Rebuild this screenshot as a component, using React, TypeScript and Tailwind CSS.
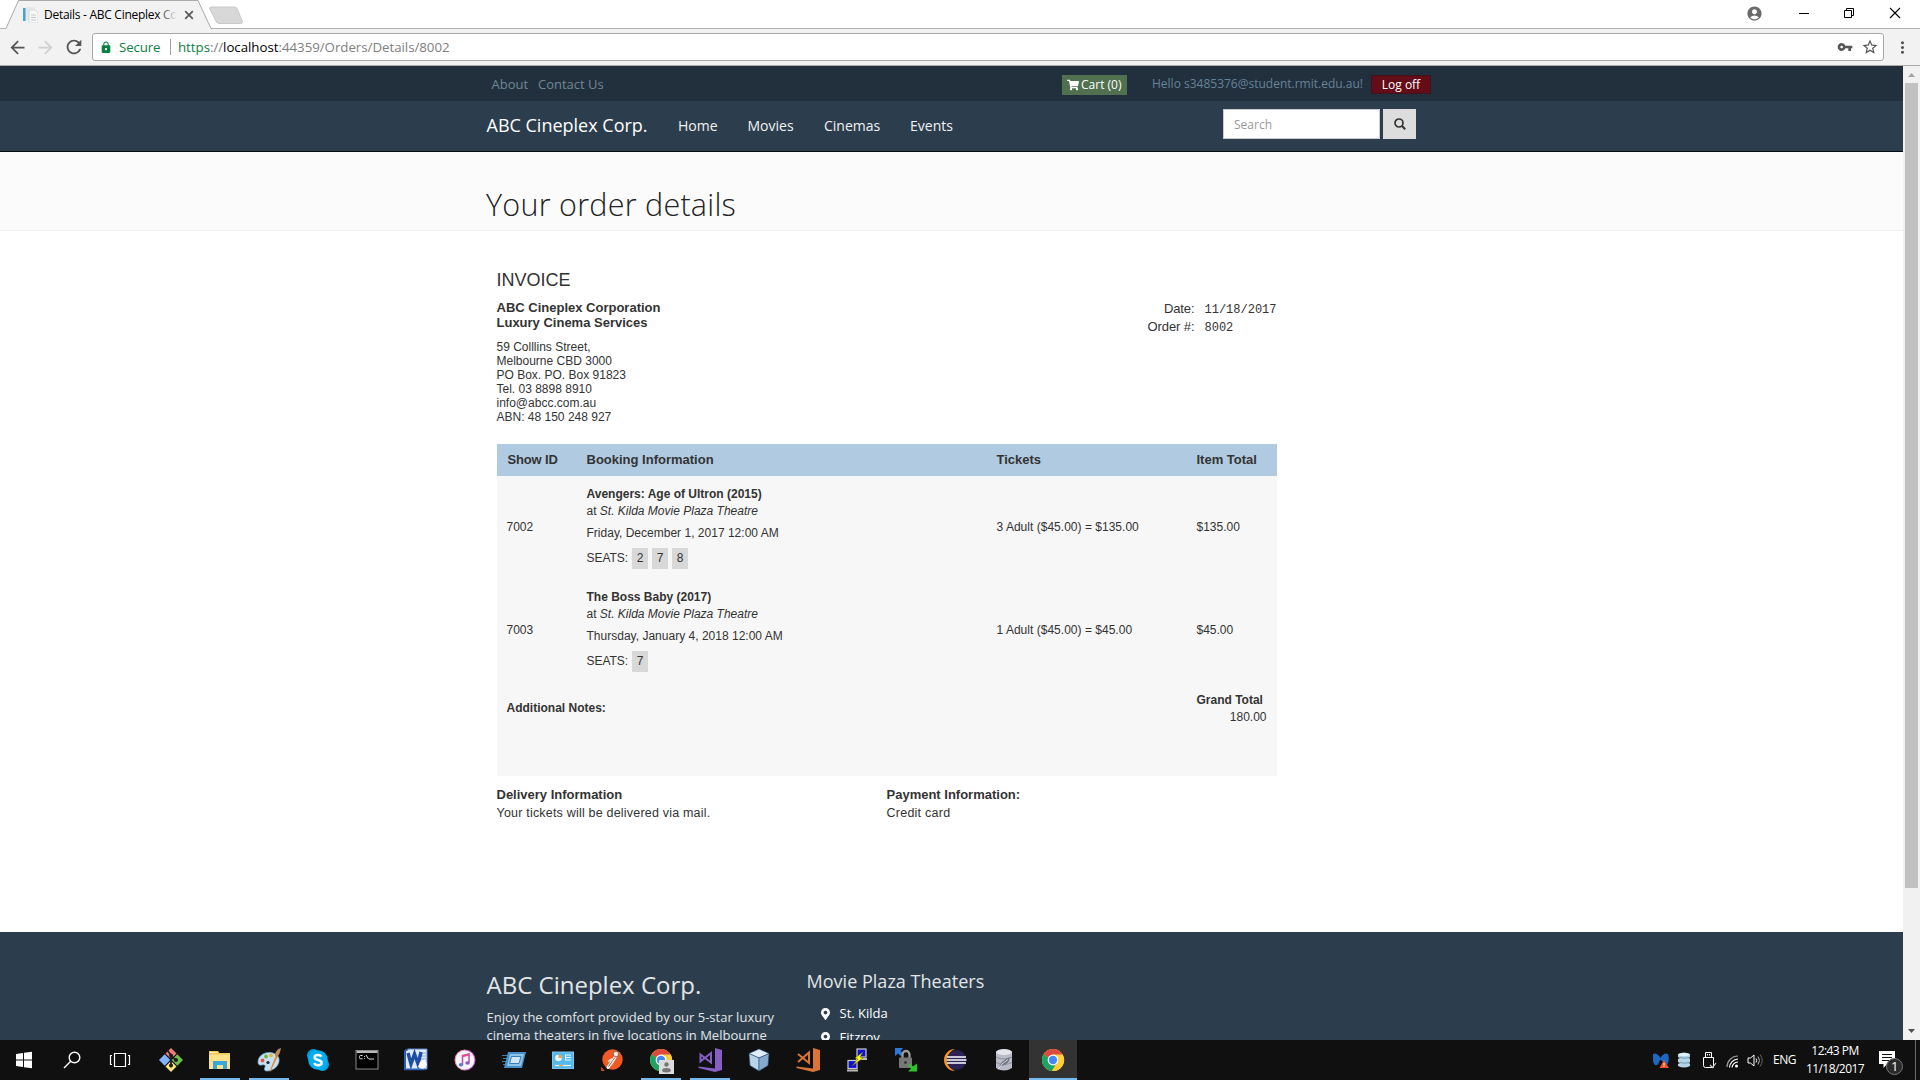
import React from "react";
import {
  MdAccountCircle,
  MdArrowBack,
  MdArrowForward,
  MdLock,
  MdMoreVert,
  MdRefresh,
  MdStarBorder,
  MdVpnKey,
} from "react-icons/md";
import { FaMapMarkerAlt, FaShoppingCart } from "react-icons/fa";

/* ---------- Browser chrome ---------- */

function TabStrip() {
  return (
    <div className="flex h-[29px] shrink-0 items-start border-b border-[#b3b3b3] bg-white">
      <div className="relative ml-[5px] -mb-px h-[29px] w-[208px] shrink-0">
        <svg className="absolute inset-0" width="208" height="29" viewBox="0 0 208 29">
          <path d="M0 29 L1 28.5 L13.5 .5 H193 L206 28.5 L208 29Z" fill="#f2f2f2" />
          <path d="M0 28.5 H1 L13.5 .5 H193 L206 28.5 H208" fill="none" stroke="#a9a9a9" />
        </svg>
        <div className="relative flex h-[29px] items-center pl-[17px]">
          <svg width="16" height="16" viewBox="0 0 16 16" className="shrink-0">
            <rect x="1" y="1" width="2.6" height="13" fill="#4ba3d3" />
            <rect x="4" y="0" width="9" height="13" fill="#e6e9ec" />
            <path d="M7 3h6l3 3v10H7z" fill="#f8f8f8" stroke="#cfd3d6" strokeWidth=".8" />
            <path d="M9 8h5M9 10.500h5M9 13h5" stroke="#c3c8cc" />
          </svg>
          <div className="relative ml-[6px] h-[20px] w-[133px] overflow-hidden whitespace-nowrap font-['Open_Sans',sans-serif] text-[12px] leading-[20px] tracking-[-0.28px] text-black">
            Details - ABC Cineplex Corp.
            <div className="absolute top-0 right-0 h-full w-[20px] bg-gradient-to-r from-transparent to-[#f2f2f2]" />
          </div>
          <svg className="ml-[7px]" width="10" height="10" viewBox="0 0 10 10">
            <path d="M1.200 1.200l7.600 7.600M8.800 1.200l-7.600 7.600" stroke="#5a5a5a" strokeWidth="1.700" />
          </svg>
        </div>
      </div>
      <svg className="mt-[6px] -ml-[5px]" width="37" height="20" viewBox="0 0 37 20">
        <path d="M3.500 1h23q2 0 2.800 2l5 12.500q.5 2-1.500 2H11q-2 0-2.800-2L1.800 3Q1.200 1 3.500 1z" fill="#d8d8d8" stroke="#c9c9c9" />
      </svg>
      <div className="ml-auto flex h-[26px] items-center">
        <MdAccountCircle className="mr-[35px] h-[17px] w-[17px] text-[#6b6b6b]" />
        <svg className="mr-[33px]" width="12" height="12" viewBox="0 0 12 12">
          <path d="M1 6.500h10" stroke="#000" />
        </svg>
        <svg className="mr-[34px]" width="12" height="12" viewBox="0 0 12 12">
          <path d="M1.500 3.500h7v7h-7zM3.500 3.500v-2h7v7h-2" fill="none" stroke="#000" />
        </svg>
        <svg className="mr-[19px]" width="12" height="12" viewBox="0 0 12 12">
          <path d="M1 1l10 10M11 1L1 11" stroke="#000" strokeWidth="1.100" />
        </svg>
      </div>
    </div>
  );
}

function Toolbar() {
  return (
    <div className="flex h-[37px] shrink-0 items-center border-b border-[#a9a9a9] bg-[#f2f2f2] font-['Open_Sans',sans-serif] text-[13px]">
      <MdArrowBack className="ml-[7px] h-[21px] w-[21px] text-[#555]" />
      <MdArrowForward className="ml-[7px] h-[21px] w-[21px] text-[#d0d0d0]" />
      <MdRefresh className="ml-[7px] h-[22px] w-[22px] text-[#555]" />
      <div className="ml-[7px] flex h-[28px] w-[1792px] items-center rounded-[3px] border border-[#a9a9a9] bg-white">
        <MdLock className="ml-[6px] h-[13px] w-[14px] text-[#0b8043]" />
        <span className="ml-[6px] w-[51px] pt-px text-[13.300px] whitespace-nowrap text-[#0b8043] tracking-[-0.15px]">Secure</span>
        <span className="h-[16px] w-px bg-[#a0a0a0]" />
        <span className="ml-[7px] pt-px text-[13.300px] whitespace-nowrap tracking-[-0.035px] text-[#808080]">
          <span className="text-[#0b8043]">https</span>://<span className="text-black">localhost</span>:44359/Orders/Details/8002
        </span>
        <MdVpnKey className="ml-auto h-[16px] w-[16px] text-[#555]" />
        <MdStarBorder className="mr-[4px] ml-[8px] h-[18px] w-[18px] text-[#555]" />
      </div>
      <MdMoreVert className="ml-[9px] h-[19px] w-[19px] text-[#555]" />
    </div>
  );
}

function Scrollbar() {
  return (
    <div className="flex w-[17px] shrink-0 flex-col items-center bg-[#f1f1f1]">
      <svg width="17" height="17" viewBox="0 0 17 17">
        <path d="M5 11h7L8.500 7z" fill="#a3a3a3" />
      </svg>
      <div className="h-[805px] w-[13px] bg-[#c1c1c1]" />
      <svg className="mt-auto" width="17" height="17" viewBox="0 0 17 17">
        <path d="M5 6h7L8.500 10z" fill="#505050" />
      </svg>
    </div>
  );
}

/* ---------- Site ---------- */

function SiteHeader() {
  return (
    <header className="font-['Open_Sans',sans-serif]">
      <div className="flex h-[35px] items-center bg-[#22303d] pl-[491.500px] text-[13px] text-[#708896]">
        <a className="w-[46.500px] pt-[2px]">About</a>
        <a className="pt-[2px]">Contact Us</a>
        <div className="mt-[3px] ml-auto flex h-[20px] w-[65px] items-center bg-[#50704f] pl-[5px] text-[12px] text-white">
          <FaShoppingCart className="mr-[2px] h-[12px] w-[12px] shrink-0" />
          <span className="whitespace-nowrap">Cart (0)</span>
        </div>
        <span className="ml-[25px] w-[219px] text-[12px] whitespace-nowrap text-[#66839a]">Hello s3485376@student.rmit.edu.au!</span>
        <a className="mt-[2px] mr-[472px] flex h-[19px] w-[60px] items-center justify-center border border-[#3c141b] bg-[#640c17] text-[12px] text-white">Log off</a>
      </div>
      <nav className="flex h-[51px] items-center border-b border-[#060b10] bg-[#2c3e4d] pl-[486.500px] text-[14px] text-[#f0f2f3]">
        <span className="mb-px w-[191.500px] text-[18px] text-white">ABC Cineplex Corp.</span>
        <a className="mb-[2px] w-[69.500px]">Home</a>
        <a className="mb-[2px] w-[76.500px]">Movies</a>
        <a className="mb-[2px] w-[86px]">Cinemas</a>
        <a className="mb-[2px]">Events</a>
        <div className="mr-[487px] mb-[4px] ml-auto flex gap-[3px]">
          <div className="h-[30px] w-[157px] border border-[#ccc] bg-white pl-[10px] text-[12px] leading-[30px] text-[#999]">Search</div>
          <div className="flex h-[30px] w-[33px] items-center justify-center bg-[#ddd]">
            <svg width="12" height="12" viewBox="0 0 12 12">
              <circle cx="5" cy="5" r="4" fill="none" stroke="#333" strokeWidth="1.700" />
              <path d="M8 8l3.200 3.200" stroke="#333" strokeWidth="2" />
            </svg>
          </div>
        </div>
      </nav>
      <div className="h-[79px] border-b border-[#f0f0f0] bg-[#fbfbfb] pt-[32px] pl-[486px]">
        <h1 className="text-[30.500px] leading-[40px] font-[340] tracking-[0.25px] text-[#222]">Your order details</h1>
      </div>
    </header>
  );
}

const columns = "grid grid-cols-[80px_410px_200px_90px]";

const bookings = [
  {
    id: "7002",
    title: "Avengers: Age of Ultron (2015)",
    when: "Friday, December 1, 2017 12:00 AM",
    seats: ["2", "7", "8"],
    tickets: "3 Adult ($45.00) = $135.00",
    total: "$135.00",
  },
  {
    id: "7003",
    title: "The Boss Baby (2017)",
    when: "Thursday, January 4, 2018 12:00 AM",
    seats: ["7"],
    tickets: "1 Adult ($45.00) = $45.00",
    total: "$45.00",
  },
];

function Invoice() {
  return (
    <main className="ml-[496.500px] h-[701px] w-[780px] shrink-0 pt-[39px] font-['Liberation_Sans',Arial,sans-serif] text-[12px] leading-[17px] text-[#333]">
      <h2 className="text-[18px] leading-[20px]">INVOICE</h2>
      <div className="mt-[10px] flex h-[124px] justify-between">
        <div>
          <div className="text-[13px] leading-[15px] font-bold">
            ABC Cineplex Corporation
            <br />
            Luxury Cinema Services
          </div>
          <div className="mt-[10px] leading-[14px]">
            59 Colllins Street,
            <br />
            Melbourne CBD 3000
            <br />
            PO Box. PO. Box 91823
            <br />
            Tel. 03 8898 8910
            <br />
            info@abcc.com.au
            <br />
            ABN: 48 150 248 927
          </div>
        </div>
        <div className="grid h-[36px] grid-cols-[1fr_72px] grid-rows-[18px_18px] gap-x-[10px] leading-[18px]">
          <span className="text-right text-[13px] tracking-[-0.1px]">Date:</span>
          <span className="pt-px font-['Liberation_Mono',monospace] text-[12px]">11/18/2017</span>
          <span className="text-right text-[13px] tracking-[-0.1px]">Order #:</span>
          <span className="pt-px font-['Liberation_Mono',monospace] text-[12px]">8002</span>
        </div>
      </div>
      <div className="mt-[20px] h-[332px] bg-[#f7f7f7]">
        <div className={columns + " h-[32px] bg-[#b0cbe1] pt-[7px] text-[13px] leading-[18px] font-bold"}>
          <span className="pl-[11px] tracking-[-0.15px]">Show ID</span>
          <span className="pl-[10px]">Booking Information</span>
          <span className="pl-[10px]">Tickets</span>
          <span className="pl-[10px]">Item Total</span>
        </div>
        {bookings.map((b) => (
          <div key={b.id} className={columns + " h-[103px] items-center"}>
            <span className="pl-[10px]">{b.id}</span>
            <div className="h-full pt-[10px] pl-[10px]">
              <div className="font-bold">{b.title}</div>
              <div>
                at <em>St. Kilda Movie Plaza Theatre</em>
              </div>
              <div className="mt-[5px] tracking-[0.01px]">{b.when}</div>
              <div className="mt-[6px] flex h-[21px] items-center gap-[4px]">
                <span className="w-[41.500px] tracking-[-0.05px]">SEATS:</span>
                {b.seats.map((s) => (
                  <span key={s} className="h-[21px] w-[16px] bg-[#d8d8d8] text-center leading-[20px]">
                    {s}
                  </span>
                ))}
              </div>
            </div>
            <span className="pl-[10px] tracking-[0.02px]">{b.tickets}</span>
            <span className="pl-[10px]">{b.total}</span>
          </div>
        ))}
        <div className="flex h-[53px] items-center justify-between pr-[10px] pl-[10px]">
          <span className="font-bold">Additional Notes:</span>
          <div className="w-[70px]">
            <div className="font-bold">Grand Total</div>
            <div className="text-right">180.00</div>
          </div>
        </div>
      </div>
      <div className="grid grid-cols-2 pt-[10px] leading-[18px]">
        <div>
          <div className="text-[13px] font-bold">Delivery Information</div>
          <div className="text-[12.500px] tracking-[0.2px]">Your tickets will be delivered via mail.</div>
        </div>
        <div>
          <div className="text-[13px] font-bold">Payment Information:</div>
          <div className="text-[12.500px] tracking-[0.25px]">Credit card</div>
        </div>
      </div>
    </main>
  );
}

function SiteFooter() {
  return (
    <footer className="flex h-[108px] shrink-0 overflow-hidden bg-[#2c3e4d] pl-[486.500px] font-['Open_Sans',sans-serif] text-[13px] text-[#e2e5e7]">
      <div className="w-[320px] pt-[37px]">
        <div className="text-[24px] leading-[32px]">ABC Cineplex Corp.</div>
        <p className="mt-[7px] w-[300px] leading-[18px] tracking-[0.01px] whitespace-nowrap">
          Enjoy the comfort provided by our 5-star luxury
          <br />
          cinema theaters in five locations in Melbourne
        </p>
      </div>
      <div className="pt-[37px]">
        <div className="text-[18px] leading-[24px] tracking-[0.02px]">Movie Plaza Theaters</div>
        <div className="mt-[9px] text-white">
          {["St. Kilda", "Fitzroy"].map((place) => (
            <div key={place} className="flex h-[24px] items-center pl-[14px]">
              <FaMapMarkerAlt className="mr-[10px] mb-px h-[12px] w-[9px]" />
              {place}
            </div>
          ))}
        </div>
      </div>
    </footer>
  );
}

/* ---------- Taskbar ---------- */

function ChromeLogo() {
  return (
    <>
      <circle cx="12" cy="12" r="11" fill="#f1c232" />
      <path d="M12 12L2.500 6.500A11 11 0 0 1 21.500 6.500Z" fill="#dd4b3e" />
      <path d="M12 12L2.500 6.500A11 11 0 0 0 11 23l4.500-8Z" fill="#1ea362" />
      <path d="M12 6.500h9.700A11 11 0 0 1 11 23l5.500-9z" fill="#fdd03b" />
      <circle cx="12" cy="12" r="5.400" fill="#fff" />
      <circle cx="12" cy="12" r="4.200" fill="#4688f1" />
    </>
  );
}

const icons: Record<string, React.ReactNode> = {
  start: (
    <path d="M4 6l7-1v6.500H4zM12 4.800l8-1.100v7.800h-8zM4 12.500h7V19l-7-1zM12 12.500h8v7.800l-8-1.100z" fill="#fff" />
  ),
  search: (
    <g fill="none" stroke="#fff" strokeWidth="1.400">
      <circle cx="14.500" cy="9.500" r="5.300" />
      <path d="M10.700 13.300L4 20" />
    </g>
  ),
  taskview: (
    <path d="M6.500 5.500h11v13h-11zM4 7.500H2.500v9H4M20 7.500h1.500v9H20" fill="none" stroke="#fff" strokeWidth="1.200" />
  ),
  git: (
    <g>
      <path d="M12 0l5.500 5.500L12 11 6.500 5.500z" fill="#f27b7b" />
      <path d="M5.700 6.300l5.500 5.700-5.500 5.700L0 12z" fill="#80b3ff" />
      <path d="M18.300 6.300L24 12l-5.700 5.700L12.700 12z" fill="#6fc04c" />
      <path d="M12 13l5.500 5.500L12 24l-5.500-5.500z" fill="#ffe27a" />
      <path d="M8 2l4 5v11M12 8l5 4" stroke="#1c1c1c" strokeWidth="1.700" fill="none" />
      <circle cx="12" cy="7.500" r="2" fill="#1c1c1c" />
      <circle cx="17" cy="12" r="2" fill="#1c1c1c" />
      <circle cx="12" cy="17.500" r="2" fill="#1c1c1c" />
    </g>
  ),
  explorer: (
    <g>
      <path d="M1 3h9l1.500 2H22v16H1z" fill="#f0c64f" />
      <path d="M1 6.500h21V21H1z" fill="#fde18b" />
      <path d="M2 4.500h7" stroke="#fff3c4" />
      <path d="M5 21v-8h14v8h-4v-4H9v4z" fill="#3aa7dc" />
    </g>
  ),
  paint: (
    <g>
      <path d="M1 14C1 8 7 4 13 4.500c6 .5 10 4 9 9-1 6-7 9.500-12 9.500-3 0-3-2-2-4s-1-2.500-3-2-4 0-4-3z" fill="#c4e2f4" stroke="#6fa8cf" strokeWidth=".7" />
      <circle cx="5.500" cy="12.500" r="1.900" fill="#e5553d" />
      <circle cx="9" cy="8.500" r="1.900" fill="#66b94d" />
      <circle cx="14" cy="7.500" r="1.900" fill="#f2b338" />
      <circle cx="11" cy="14.500" r="1.600" fill="#182433" />
      <path d="M12.500 23.500L19 7l2 1-7.500 15.500z" fill="#e08a35" />
      <path d="M18 8c0-4 2-7 6-8-1 4-1 6-4 9z" fill="#b98a55" />
    </g>
  ),
  skype: (
    <g>
      <circle cx="7.500" cy="7.500" r="6.500" fill="#00a1e4" />
      <circle cx="16.500" cy="16.500" r="6.500" fill="#00a1e4" />
      <circle cx="12" cy="12" r="9.800" fill="#05aef0" />
      <path d="M15.500 8.700c-.8-1.300-2-1.800-3.600-1.800-2 0-3.300 1-3.300 2.400 0 3.600 7 1.900 7 5.400 0 1.600-1.500 2.500-3.600 2.500-1.800 0-3.200-.7-4-2.100" fill="none" stroke="#fff" strokeWidth="2.500" />
    </g>
  ),
  cmd: (
    <g>
      <rect x="1" y="2.500" width="22" height="18.500" fill="#000" stroke="#8a8a8a" />
      <path d="M1.500 4h21" stroke="#b9b9b9" strokeWidth="2" />
      <path d="M7.500 7.500H5.500q-1 0-1 1.200v.8q0 1.300 1 1.300h2M9.500 8v.9M9.500 10.200v.8M11 7l2.500 4M14 11h5" stroke="#ddd" fill="none" />
    </g>
  ),
  word: (
    <g>
      <path d="M4 1h19v20H1V4z" fill="#dfe9f8" stroke="#5b86c9" />
      <path d="M16 5h6M16 8h6M16 11h6" stroke="#88a6d8" />
      <path d="M4 5l3 11 3.500-10L14 16l3-12" stroke="#1c4ea6" strokeWidth="3.400" fill="none" />
      <path d="M1 22V3l3-2" stroke="#2b5eb4" strokeWidth="2" fill="none" />
      <path d="M0 21.500h21M14 18.500h5" stroke="#2b5eb4" strokeWidth="1.500" />
      <path d="M16 14l5-3 2 6-4 4-5-2z" fill="#fff" />
    </g>
  ),
  itunes: (
    <g>
      <path d="M12 1.500a10.500 10.500 0 0 1 0 21z" fill="#c95bd0" />
      <path d="M12 1.500a10.500 10.500 0 0 0 0 21z" fill="#e88fae" />
      <circle cx="12" cy="12" r="9.400" fill="#f7f4fa" />
      <path d="M9.500 16.500V7.500l6.500-1.500v9" stroke="#c14fae" strokeWidth="1.500" fill="none" />
      <path d="M9 8.200l7.500-1.700" stroke="#e64a8a" strokeWidth="2.200" />
      <ellipse cx="8" cy="16.800" rx="2.200" ry="1.700" fill="#5b7be0" />
      <ellipse cx="14.500" cy="15" rx="2.200" ry="1.700" fill="#8a57d5" />
    </g>
  ),
  run: (
    <g>
      <path d="M0 7.500h6M1 10.500h5M0 13.500h4M1 16.500h4" stroke="#3f7ea8" />
      <path d="M6 4h18l-4 16H2z" fill="#4a8fc4" />
      <path d="M8 6h14l-3 12H5z" fill="#8cc4ea" />
      <path d="M9.500 8.500h9.500l-2 7H7.500z" fill="#cde8fa" stroke="#3b7fb5" />
    </g>
  ),
  panel: (
    <g>
      <rect x="1.500" y="4" width="21" height="16.500" fill="#55b9ec" stroke="#7cc6ee" />
      <circle cx="7.500" cy="10" r="3.300" fill="#eaf7ff" />
      <path d="M7.500 10V6.500a3.500 3.500 0 0 1 3.500 3.500z" fill="#f4a340" />
      <path d="M15 7h5M15 9.500h5M15 12h5M14.500 6.500v6" stroke="#e9f7ff" strokeWidth="1" />
      <path d="M4 17.500h16" stroke="#e6f6ff" strokeWidth="1.200" />
      <path d="M8 17.500h4" stroke="#f4a340" strokeWidth="1.200" />
    </g>
  ),
  postman: (
    <g>
      <circle cx="12.500" cy="11.500" r="10.200" fill="#f15a24" />
      <path d="M1 18.500l4 4.500H1z" fill="#c4431a" />
      <path d="M8 19.500l7.500-11" stroke="#fff" strokeWidth="3" strokeLinecap="round" />
      <path d="M8.500 18.500l6.500-9" stroke="#6d4a3a" strokeWidth="1" />
      <path d="M12 11l-4 2.500M15 11l-4 6" stroke="#ffe3d5" strokeWidth="1.500" />
      <circle cx="16" cy="6" r="2.800" fill="#f3e6de" stroke="#5c4439" strokeWidth=".7" />
    </g>
  ),
  chromeProfile: (
    <g>
      <ChromeLogo />
      <rect x="10" y="12" width="15" height="14" fill="#dcdcdc" />
      <circle cx="17.500" cy="16.500" r="2.200" fill="#777" />
      <ellipse cx="17.500" cy="22.300" rx="4.300" ry="2.200" fill="#777" />
    </g>
  ),
  vs: (
    <g>
      <path d="M17 0l7 2v20l-7 2-16.500-4v-1.500L17 20.500z" fill="#865fc5" />
      <path d="M2.500 6.500L13 14.500V5L2.500 13.500z" fill="none" stroke="#865fc5" strokeWidth="2" />
    </g>
  ),
  vbox: (
    <g stroke="#2b4a78" strokeWidth=".6">
      <path d="M12 1l10 4.500L12 10 2 5.500z" fill="#dfeefa" />
      <path d="M2 5.500L12 10v13L3 17.500z" fill="#b8d4e8" />
      <path d="M22 5.500L12 10v13l9-5.500z" fill="#86a9cc" />
    </g>
  ),
  vscode: (
    <g>
      <path d="M17 0l7 2v20l-7 2-16.500-4v-1.500L17 20.500z" fill="#d97536" />
      <path d="M2 6l11 9V4.500L2 14" fill="none" stroke="#d97536" strokeWidth="2" />
    </g>
  ),
  putty: (
    <g>
      <rect x="12" y="1" width="9" height="8" fill="#1010d0" stroke="#ccc" strokeWidth="1.200" />
      <path d="M11 11h11" stroke="#bbb" strokeWidth="2" />
      <rect x="3" y="12.500" width="9" height="8" fill="#1010d0" stroke="#ccc" strokeWidth="1.200" />
      <path d="M2 22.500h11" stroke="#bbb" strokeWidth="2" />
      <path d="M18 4l-8 6 3 1-6 7 11-8-3-1z" fill="#ff0" stroke="#5a5a00" strokeWidth=".5" />
    </g>
  ),
  winscp: (
    <g>
      <path d="M1 0h8L6.500 3l3 3-2.500 2-3-2.500L1 8z" fill="#2879d8" />
      <path d="M8.500 10V6.500a3.500 3.500 0 0 1 7 0V10" fill="none" stroke="#999" strokeWidth="2.300" />
      <rect x="5" y="9.500" width="13" height="10.500" rx="1" fill="#777" />
      <circle cx="11.500" cy="14.500" r="1.200" fill="#222" />
      <path d="M23 23.500h-9l3-3-3-3 2-2 3 3 4-3z" fill="#2cc52c" />
    </g>
  ),
  eclipse: (
    <g>
      <path d="M12 1A11 11 0 0 0 12 23 12 12 0 0 1 12 1z" fill="#f7941e" />
      <circle cx="13.500" cy="12" r="10" fill="#2c2255" />
      <path d="M4 9h19M3.500 12h20M4 15h19" stroke="#fff" strokeWidth="1.600" />
    </g>
  ),
  sqlite: (
    <g>
      <path d="M4 4v16q8 5 16 0V4z" fill="#b9bcc6" />
      <ellipse cx="12" cy="4" rx="8" ry="3" fill="#e4e6ec" />
      <path d="M4 9q8 4 16 0M4 14.500q8 4 16 0" stroke="#8f93a0" fill="none" />
      <path d="M7 20q1-7 11-11-1 8-9 9z" fill="#71757f" />
      <path d="M6 21.500q3-6 10-10" stroke="#fff" strokeWidth=".7" fill="none" />
    </g>
  ),
  chrome: <ChromeLogo />,
};

const tasks = [
  { name: "git" },
  { name: "explorer", open: true },
  { name: "paint", open: true },
  { name: "skype" },
  { name: "cmd" },
  { name: "word" },
  { name: "itunes" },
  { name: "run" },
  { name: "panel" },
  { name: "postman" },
  { name: "chromeProfile", open: true },
  { name: "vs", open: true },
  { name: "vbox" },
  { name: "vscode" },
  { name: "putty" },
  { name: "winscp" },
  { name: "eclipse" },
  { name: "sqlite" },
];

function Glyph({ name }: { name: string }) {
  return (
    <svg width="24" height="24" viewBox="0 0 24 24" className="overflow-visible">
      {icons[name]}
    </svg>
  );
}

function Taskbar() {
  return (
    <div className="flex h-[40px] shrink-0 bg-[#101010] font-['Open_Sans',sans-serif] text-[12px] text-white">
      {["start", "search", "taskview"].map((n) => (
        <div key={n} className="flex w-[48px] items-center justify-center">
          <Glyph name={n} />
        </div>
      ))}
      <div className="flex w-[885px] pl-[2px]">
        {tasks.map((t) => (
          <div key={t.name} className="flex w-[49px] shrink-0 flex-col items-center pt-[8px]">
            <Glyph name={t.name} />
            {t.open && <div className="mt-auto h-[2px] w-[40px] bg-[#76b9ed]" />}
          </div>
        ))}
      </div>
      <div className="flex w-[48px] flex-col items-center bg-[#333] pt-[8px]">
        <Glyph name="chrome" />
        <div className="mt-auto h-[2px] w-full bg-[#76b9ed]" />
      </div>
      <div className="ml-auto flex items-center">
        <svg width="16" height="16" viewBox="0 0 16 16">
          <path d="M0 2q4-2 7.500 4Q11 0 15 2q2 6-1 11-3 1-4-3L7.500 7.500 6 10q-1 4-4 3-4-5-2-11z" fill="#1f66c0" />
          <path d="M11 8l5 8H6.500z" fill="#f4511e" />
          <path d="M11 11v2.500M11 14v1" stroke="#fff" />
        </svg>
        <svg className="ml-[8px]" width="14" height="16" viewBox="0 0 14 16">
          <path d="M1 2q6-3 12 0v3l-1 1 1 1v3l-1 1 1 1v2q-6 3-12 0v-2l2-1-2-1V7l2-1-2-1z" fill="#b5d5e6" />
          <path d="M3 5.500q5 1.500 9 0M3 10.500q5 1.500 9 0" stroke="#6d9cb8" fill="none" />
          <ellipse cx="7" cy="2.500" rx="5" ry="1.500" fill="#e3f2fa" />
        </svg>
        <svg className="ml-[11px]" width="15" height="17" viewBox="0 0 15 17">
          <path d="M3.500 5.500v-5h6v5M1.500 5.500h10v10h-8q-2 0-2-2zM5.500 2v1.500M7.500 2v1.500" fill="none" stroke="#fff" />
          <path d="M8 13l2.500 2.500L14 11" fill="none" stroke="#ccc" strokeWidth="1.200" />
        </svg>
        <svg className="mt-[3px] ml-[9px]" width="13" height="13" viewBox="0 0 13 13">
          <g fill="none" strokeWidth="1.200">
            <path d="M1 12A11 11 0 0 1 12 1" stroke="#999" />
            <path d="M3.500 12.500A9 9 0 0 1 12 4" stroke="#fff" />
            <path d="M6 12.500A6.500 6.500 0 0 1 12 7" stroke="#fff" />
          </g>
          <circle cx="10.500" cy="11" r="1.500" fill="#fff" />
        </svg>
        <svg className="ml-[8px]" width="17" height="15" viewBox="0 0 17 15">
          <path d="M1 5h2.500L7 2v11L3.500 10H1z" fill="none" stroke="#fff" />
          <path d="M9 5.500q1.500 2 0 4" fill="none" stroke="#fff" />
          <path d="M11 3.500q3 4 0 8" fill="none" stroke="#bbb" />
          <path d="M13 1.500q4.500 6 0 12" fill="none" stroke="#666" />
        </svg>
        <span className="ml-[9px] w-[29px] text-[12px] leading-[18px] tracking-[-0.5px]">ENG</span>
        <div className="w-[66px] text-center text-[12px] leading-[18px] tracking-[-0.55px] whitespace-nowrap">
          12:43 PM
          <br />
          11/18/2017
        </div>
        <div className="relative ml-[11px] h-[18px] w-[36px]">
          <svg width="25" height="24" viewBox="0 0 25 24">
            <path d="M0 0h16v13H8l-3.500 4v-4H0z" fill="#fff" />
            <path d="M3 3.500h10M3 6.500h10M3 9.500h7" stroke="#101010" />
            <circle cx="15.500" cy="15.500" r="8" fill="#2b2b2b" stroke="#777" />
          </svg>
          <span className="absolute top-[6px] left-[12px] text-[13px] leading-[18px]">1</span>
        </div>
        <div className="h-[40px] w-[5px] border-l border-[#6a6a6a]" />
      </div>
    </div>
  );
}

export default function App() {
  return (
    <div className="flex h-[1080px] w-[1920px] flex-col overflow-hidden bg-white">
      <TabStrip />
      <Toolbar />
      <div className="flex h-[974px] shrink-0">
        <div className="flex w-[1903px] flex-col overflow-hidden bg-white">
          <SiteHeader />
          <Invoice />
          <SiteFooter />
        </div>
        <Scrollbar />
      </div>
      <Taskbar />
    </div>
  );
}
